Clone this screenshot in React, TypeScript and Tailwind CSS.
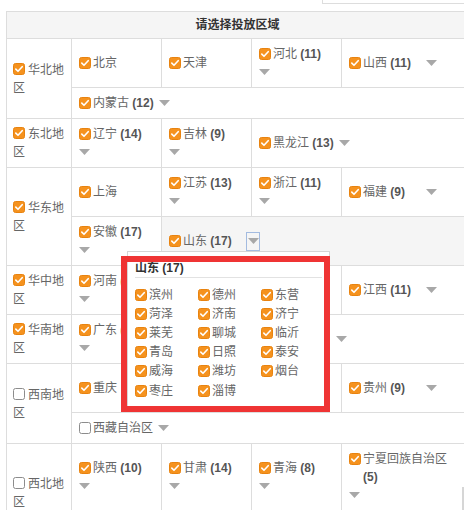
import React from "react";
import clsx from "clsx";

type CellData = { n: string; c?: number; caret?: boolean; checked?: boolean; active?: boolean };
type Region = { name: string; checked: boolean; rows: CellData[][] };

const Check = ({ checked = true }: { checked?: boolean }) =>
  checked ? (
    <svg width="12" height="12" viewBox="0 0 12 12" className="block shrink-0">
      <rect x="0.5" y="0.5" width="11" height="11" rx="2" fill="#f5921e" stroke="#e8830f" />
      <path d="M2.8 6.1 L5 8.3 L9.2 3.7" fill="none" stroke="#fff" strokeWidth="1.6" strokeLinecap="round" strokeLinejoin="round" />
    </svg>
  ) : (
    <svg width="12" height="12" viewBox="0 0 12 12" className="block shrink-0">
      <rect x="0.5" y="0.5" width="11" height="11" rx="2" fill="#fff" stroke="#8c8c8c" />
    </svg>
  );

const Caret = () => (
  <svg width="11" height="6" viewBox="0 0 11 6" className="block">
    <path d="M0 0H11L5.5 6Z" fill="#a8a8a8" />
  </svg>
);

const regions: Region[] = [
  {
    name: "华北地区",
    checked: true,
    rows: [
      [{ n: "北京" }, { n: "天津" }, { n: "河北", c: 11, caret: true }, { n: "山西", c: 11, caret: true }],
      [{ n: "内蒙古", c: 12, caret: true }],
    ],
  },
  {
    name: "东北地区",
    checked: true,
    rows: [[{ n: "辽宁", c: 14, caret: true }, { n: "吉林", c: 9, caret: true }, { n: "黑龙江", c: 13, caret: true }]],
  },
  {
    name: "华东地区",
    checked: true,
    rows: [
      [{ n: "上海" }, { n: "江苏", c: 13, caret: true }, { n: "浙江", c: 11, caret: true }, { n: "福建", c: 9, caret: true }],
      [{ n: "安徽", c: 17, caret: true }, { n: "山东", c: 17, caret: true, active: true }],
    ],
  },
  {
    name: "华中地区",
    checked: true,
    rows: [[{ n: "河南", c: 17, caret: true }, { n: "湖北", c: 17, caret: true }, { n: "湖南", c: 14, caret: true }, { n: "江西", c: 11, caret: true }]],
  },
  {
    name: "华南地区",
    checked: true,
    rows: [[{ n: "广东", c: 21, caret: true }, { n: "广西", c: 14, caret: true }, { n: "海南", c: 3, caret: true }]],
  },
  {
    name: "西南地区",
    checked: false,
    rows: [
      [{ n: "重庆" }, { n: "四川", c: 21, caret: true }, { n: "云南", c: 16, caret: true }, { n: "贵州", c: 9, caret: true }],
      [{ n: "西藏自治区", caret: true, checked: false }],
    ],
  },
  {
    name: "西北地区",
    checked: false,
    rows: [
      [{ n: "陕西", c: 10, caret: true }, { n: "甘肃", c: 14, caret: true }, { n: "青海", c: 8, caret: true }, { n: "宁夏回族自治区", c: 5, caret: true }],
      [{ n: "新疆维吾尔自治区", caret: true, checked: false }],
    ],
  },
];

const Cell = ({ d, last }: { d: CellData; last: boolean }) => (
  <div
    className={clsx(
      "border-l border-[#dddddd] pl-[7px] pr-[6px] py-[6px] flex items-center",
      last ? "flex-1 min-w-0" : "w-[90px] shrink-0",
      d.active && "bg-[#f5f5f5]"
    )}
  >
    <div className="flex flex-wrap items-center leading-[18px] text-[12px] text-[#666] w-full">
      <span className="flex items-start min-w-[77px] pr-[5px]">
        <span className="h-[18px] flex items-center mr-[2px] shrink-0">
          <Check checked={d.checked !== false} />
        </span>
        <span>
          {d.n}
          {d.c !== undefined && (
            <>
              {" "}
              <b className="text-[#555]">({d.c})</b>
            </>
          )}
        </span>
      </span>
      {d.caret &&
        (d.active ? (
          <span className="h-[19px] w-[14px] border border-[#a3bbe0] flex items-center justify-center">
            <Caret />
          </span>
        ) : (
          <span className="h-[18px] flex items-center">
            <Caret />
          </span>
        ))}
    </div>
  </div>
);

const shandong = ["滨州", "德州", "东营", "菏泽", "济南", "济宁", "莱芜", "聊城", "临沂", "青岛", "日照", "泰安", "威海", "潍坊", "烟台", "枣庄", "淄博"];

export default function App() {
  return (
    <div className="relative w-[464px] h-[510px] overflow-hidden bg-white font-['Liberation_Sans','Noto_Sans_CJK_SC',sans-serif]">
      <div className="h-[4px] flex justify-end">
        <div className="w-[142px] border-l border-b border-[#dddddd]" />
      </div>
      <div className="mt-[7px] ml-[6px] w-[462px]">
        <div className="h-[28px] border-t border-l border-b border-[#dddddd] bg-[#f5f5f5] flex items-center justify-center text-[12px] font-bold text-[#333]">
          请选择投放区域
        </div>
        {regions.map((r) => (
          <div key={r.name} className="flex">
            <div className="w-[65px] shrink-0 border-l border-b border-[#dddddd] pl-[6px] pr-[5px] flex items-center">
              <div className="leading-[18px] text-[12px] text-[#666]">
                <span className="inline-block align-[-1px] mr-[3px]">
                  <Check checked={r.checked} />
                </span>
                {r.name}
              </div>
            </div>
            <div className="flex-1 flex flex-col">
              {r.rows.map((row, i) => (
                <div key={i} className="flex border-b border-[#dddddd]">
                  {row.map((d, j) => (
                    <Cell key={d.n} d={d} last={j === row.length - 1} />
                  ))}
                </div>
              ))}
            </div>
          </div>
        ))}
      </div>

      <div className="absolute left-[127px] top-[251px] w-[203px] h-[160px] bg-white border border-[#d5d5d5] px-[7px] pt-[7px]">
        <div className="h-[19px] leading-[18px] border-b border-[#e2e2e2] font-bold text-[12px] text-[#333]">
          山东 <span>(17)</span>
        </div>
        <div className="mt-[7px] grid grid-cols-[63px_63px_63px] auto-rows-[19.2px]">
          {shandong.map((c) => (
            <div key={c} className="flex items-center gap-[2px] text-[12px] text-[#666] leading-[18px]">
              <Check />
              <span>{c}</span>
            </div>
          ))}
        </div>
      </div>
      <div className="absolute left-[121px] top-[256px] w-[209px] h-[156px] border-[6px] border-[#ef3434]" />
      <div className="absolute left-[462px] top-[487px] w-[2px] h-[23px] bg-[#d6d6d6]" />
    </div>
  );
}
